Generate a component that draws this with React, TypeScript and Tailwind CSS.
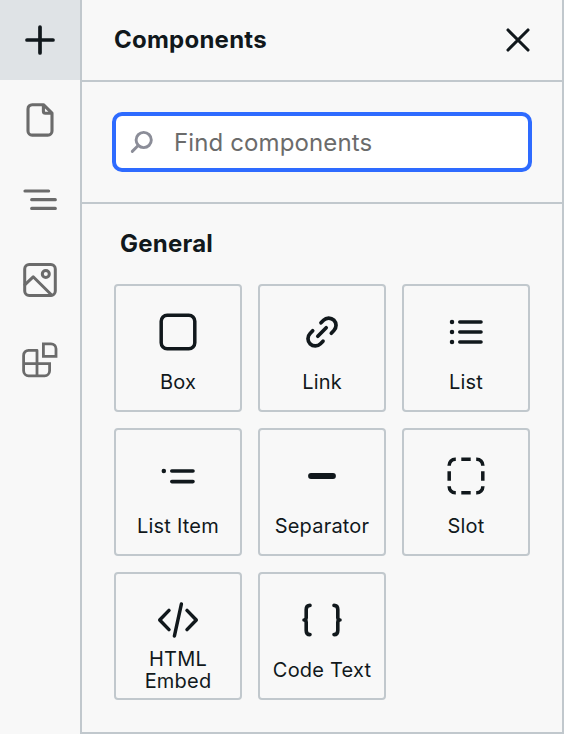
import type { ReactNode } from "react";

function Icon({ children, width = 3.5, className = "" }: { children: ReactNode; width?: number; className?: string }) {
  return (
    <svg
      viewBox="-24 -24 48 48"
      width="48"
      height="48"
      fill="none"
      stroke="currentColor"
      strokeWidth={width}
      strokeLinecap="round"
      strokeLinejoin="round"
      className={`shrink-0 ${className}`}
    >
      {children}
    </svg>
  );
}

const tabs = [
  { name: "Components", icon: <Icon width={3.7}><path d="M-13 0H13M0-13V13" /></Icon> },
  {
    name: "Pages",
    icon: (
      <Icon width={3.1}>
        <path d="M3.4-15.3H-7.8a4.2 4.2 0 0 0-4.2 4.2V10.9a4.2 4.2 0 0 0 4.2 4.2H7.8a4.2 4.2 0 0 0 4.2-4.2V-6.8zV-8.8a2 2 0 0 0 2 2H12" />
      </Icon>
    ),
  },
  { name: "Navigator", icon: <Icon width={3.2}><path d="M-15-9H8.6M-8.3-.3H15.3M-8.3 8.4H15.3" /></Icon> },
  {
    name: "Assets",
    icon: (
      <Icon width={3}>
        <rect x="-15.3" y="-15.4" width="30.6" height="30.8" rx="4.5" />
        <circle cx="5.8" cy="-6" r="3.5" />
        <path d="M-15 4.6L-6.8-3.2 11.6 15" />
      </Icon>
    ),
  },
  {
    name: "Marketplace",
    icon: (
      <Icon width={2.8}>
        <path strokeLinejoin="miter" d="M-3-9.6H-11.4a5 5 0 0 0-5 5V10.8a5 5 0 0 0 5 5H4.6a5 5 0 0 0 5-5V3.6H-16.4M-3-9.6V15.8M3.4-16.2H11a5 5 0 0 1 5 5V-3.6H3.4z" />
      </Icon>
    ),
  },
];

const components = [
  { label: "Box", icon: <Icon><rect x="-16.8" y="-16.8" width="33.6" height="33.6" rx="6" /></Icon> },
  {
    label: "Link",
    icon: (
      <Icon width={3.7}>
        <path d="M-4.2 4.2L4.2-4.2M-1-9.2L1.5-11.8A7.3 7.3 0 0 1 11.9-1.5L9.3 1.2M1 9.2L-1.5 11.8A7.3 7.3 0 0 1-11.9 1.5L-9.3-1.2" />
      </Icon>
    ),
  },
  {
    label: "List",
    icon: (
      <Icon width={3.6}>
        <path strokeWidth="4.5" d="M-14-10h.01M-14 0h.01M-14 10h.01" />
        <path d="M-6.2-10H15M-6.2 0H15M-6.2 10H15" />
      </Icon>
    ),
  },
  {
    label: "List Item",
    icon: (
      <Icon width={3.6}>
        <path strokeWidth="4.5" d="M-14.2-5h.01" />
        <path d="M-6.2-5H15M-6.2 5.6H15" />
      </Icon>
    ),
  },
  { label: "Separator", icon: <Icon width={5.8}><path d="M-11 0H11" /></Icon> },
  {
    label: "Slot",
    icon: (
      <Icon>
        <path
          strokeLinecap="butt"
          d="M-16.8-10.2V-10.8a6 6 0 0 1 6-6H-10.2M10.2-16.8H10.8a6 6 0 0 1 6 6V-10.2M16.8 10.2V10.8a6 6 0 0 1-6 6H10.2M-10.2 16.8H-10.8a6 6 0 0 1-6-6V10.2M-4.7-16.8H4.7M-4.7 16.8H4.7M-16.8-4.7V4.7M16.8-4.7V4.7"
        />
      </Icon>
    ),
  },
  { label: "HTML Embed", icon: <Icon><path d="M-9-9.6L-18.3 0-9 9.6M9-9.6L18.3 0 9 9.6M3.4-16L-3.6 16" /></Icon> },
  {
    label: "Code Text",
    icon: (
      <Icon width={3.6}>
        <path d="M-12-14.6Q-15.8-14.6-15.8-10.4V-2.4Q-15.8 0-18 0-15.8 0-15.8 2.4V10.4Q-15.8 14.6-12 14.6M12-14.6Q15.8-14.6 15.8-10.4V-2.4Q15.8 0 18 0 15.8 0 15.8 2.4V10.4Q15.8 14.6 12 14.6" />
      </Icon>
    ),
  },
];

export default function App() {
  return (
    <div className="flex h-[734px] w-[564px] overflow-hidden bg-[#f8f8f8] font-['Inter',sans-serif] text-[#11181c]">
      <nav className="flex w-20 shrink-0 flex-col">
        {tabs.map((tab, i) => (
          <button
            key={tab.name}
            aria-label={tab.name}
            className={`flex h-20 items-center justify-center ${i === 0 ? "bg-[#dfe3e6]" : "text-[#6b6b6b]"}`}
          >
            {tab.icon}
          </button>
        ))}
      </nav>
      <main className="flex flex-1 flex-col border-x-2 border-b-2 border-[#c1c8cd]">
        <header className="flex h-[82px] items-center justify-between border-b-2 border-[#c1c8cd] pr-5 pl-8">
          <h1 className="text-2xl font-bold tracking-[0.01em]">Components</h1>
          <button aria-label="Close">
            <Icon width={3.1}><path d="M-10-10L10 10M10-10L-10 10" /></Icon>
          </button>
        </header>
        <div className="h-[122px] border-b-2 border-[#c1c8cd] px-[30px] pt-[30px]">
          <label className="flex h-[60px] items-center rounded-[10px] border-4 border-[#2e6bff] bg-white">
            <Icon width={2.9} className="ml-0.5 text-[#8b8d98]">
              <circle cx="1.7" cy="-2" r="7.6" />
              <path d="M-3.8 3.5L-9.7 9.4" />
            </Icon>
            <input
              placeholder="Find components"
              className="ml-2 w-full min-w-0 bg-transparent pt-0.5 text-2xl tracking-[0.005em] outline-none placeholder:text-[#6b6b6b]"
            />
          </label>
        </div>
        <section className="px-8 pt-5">
          <h2 className="ml-1.5 h-[60px] text-2xl leading-10 font-bold tracking-[0.01em]">General</h2>
          <div className="grid grid-cols-3 gap-4">
            {components.map((item) => (
              <button
                key={item.label}
                className="flex h-32 flex-col items-center gap-1 rounded-[4px] border-2 border-[#c1c8cd] pt-[22px]"
              >
                {item.icon}
                <span className="flex h-11 items-center justify-center px-2 text-xl leading-[22px] tracking-[0.01em]">
                  {item.label}
                </span>
              </button>
            ))}
          </div>
        </section>
      </main>
    </div>
  );
}
